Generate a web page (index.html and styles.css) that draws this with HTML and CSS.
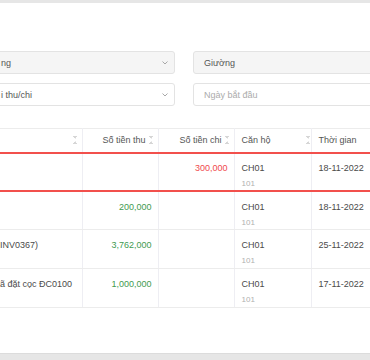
FILE: index.html
```html
<!DOCTYPE html>
<html lang="vi">
<head>
<meta charset="utf-8">
<link rel="stylesheet" href="styles.css">
</head>
<body>
<div class="page">
  <div class="topbar"></div>
  <div class="content">
    <div class="filters">
      <div class="field select filled left"><span class="val">ng</span><svg class="chev" width="6" height="4" viewBox="0 0 6 4"><path d="M0.5 0.5 L3 3 L5.5 0.5" fill="none" stroke="#a8a8a8" stroke-width="1"/></svg></div>
      <div class="field filled right"><span class="val">Giường</span></div>
      <div class="field select left"><span class="val">i thu/chi</span><svg class="chev" width="6" height="4" viewBox="0 0 6 4"><path d="M0.5 0.5 L3 3 L5.5 0.5" fill="none" stroke="#a8a8a8" stroke-width="1"/></svg></div>
      <div class="field right"><span class="ph">Ngày bắt đầu</span></div>
    </div>
    <table class="grid">
      <colgroup>
        <col class="c1"><col class="c2"><col class="c3"><col class="c4"><col class="c5">
      </colgroup>
      <thead>
        <tr>
          <th class="num"><span class="sort"></span></th>
          <th class="num">Số tiền thu<span class="sort"></span></th>
          <th class="num">Số tiền chi<span class="sort"></span></th>
          <th class="txt"><span class="lbl">Căn hộ</span><span class="sort"></span></th>
          <th class="txt">Thời gian</th>
        </tr>
      </thead>
      <tbody>
        <tr class="hl">
          <td></td>
          <td class="num"></td>
          <td class="num out">300,000</td>
          <td><div>CH01</div><div class="sub">101</div></td>
          <td>18-11-2022</td>
        </tr>
        <tr>
          <td></td>
          <td class="num in">200,000</td>
          <td class="num"></td>
          <td><div>CH01</div><div class="sub">101</div></td>
          <td>18-11-2022</td>
        </tr>
        <tr>
          <td class="desc">INV0367)</td>
          <td class="num in">3,762,000</td>
          <td class="num"></td>
          <td><div>CH01</div><div class="sub">101</div></td>
          <td>25-11-2022</td>
        </tr>
        <tr>
          <td class="desc">ã đặt cọc ĐC0100</td>
          <td class="num in">1,000,000</td>
          <td class="num"></td>
          <td><div>CH01</div><div class="sub">101</div></td>
          <td>17-11-2022</td>
        </tr>
      </tbody>
    </table>
  </div>
  <div class="bottombar"></div>
</div>
</body>
</html>
```
FILE: styles.css
```css
html, body {
  margin: 0;
  padding: 0;
  background: #ffffff;
}
body {
  font-family: "Liberation Sans", Arial, Helvetica, sans-serif;
  font-size: 9px;
  color: #4a4a4a;
  overflow: hidden;
}
.page {
  width: 370px;
  height: 360px;
  display: flex;
  flex-direction: column;
  overflow: hidden;
}
.topbar {
  height: 3px;
  background: #e6e6e6;
  flex: none;
}
.content {
  flex: 1;
  padding-top: 48px;
}
.filters {
  display: grid;
  grid-template-columns: 175px 1fr;
  column-gap: 18px;
  row-gap: 9px;
}
.field {
  height: 23px;
  box-sizing: border-box;
  border: 1px solid #e3e3e3;
  border-radius: 3px;
  background: #fff;
  display: flex;
  align-items: center;
  padding: 0 10px;
}
.field.filled {
  background: #f5f5f5;
}
.field.left {
  margin-left: -10px;
  padding-left: 10px;
  padding-right: 6px;
  justify-content: space-between;
}
.field.right {
  margin-right: -12px;
}
.val {
  color: #555;
}
.ph {
  color: #ababab;
}
.grid {
  margin-top: 22px;
  width: 382px;
  border-collapse: collapse;
  table-layout: fixed;
}
.c1 { width: 82px; }
.c2 { width: 76px; }
.c3 { width: 76px; }
.c4 { width: 77px; }
.c5 { width: 71px; }
.grid th {
  height: 24px;
  box-sizing: border-box;
  border-top: 1px solid #ececec;
  border-bottom: 1px solid #ececec;
  border-right: 1px solid #eeeef3;
  font-weight: normal;
  color: #555;
  padding: 0 4px 0 7px;
  white-space: nowrap;
}
.grid th.num {
  text-align: right;
}
.grid th.txt {
  text-align: left;
}
.grid th .lbl {
  display: inline-block;
  width: 61px;
}
.sort {
  display: inline-block;
  width: 5px;
  height: 8px;
  margin-left: 3px;
  vertical-align: -1px;
  background:
    linear-gradient(to top right, transparent 50%, #d6d6d6 50%) 0 0 / 2.5px 3px no-repeat,
    linear-gradient(to top left, transparent 50%, #d6d6d6 50%) 2.5px 0 / 2.5px 3px no-repeat,
    linear-gradient(to bottom right, transparent 50%, #d6d6d6 50%) 0 5px / 2.5px 3px no-repeat,
    linear-gradient(to bottom left, transparent 50%, #d6d6d6 50%) 2.5px 5px / 2.5px 3px no-repeat;
}
.grid td {
  height: 39px;
  box-sizing: border-box;
  vertical-align: top;
  padding: 9px 7px 0 7px;
  line-height: 12px;
  border-bottom: 1px solid #ececec;
  border-right: 1px solid #eeeef3;
  white-space: nowrap;
  overflow: hidden;
}
.grid td.desc {
  padding-left: 0;
}
.grid td.num {
  text-align: right;
  padding-right: 6px;
}
.grid td.in {
  color: #3f9a50;
}
.grid td.out {
  color: #f04a4d;
}
.grid tr.hl td {
  height: 37px;
  border-top: 2px solid #f2504c;
  border-bottom: 2px solid #f2504c;
  padding-top: 8px;
}
.sub {
  color: #b0b0b0;
  font-size: 8px;
  margin-top: 4px;
}
.bottombar {
  height: 6px;
  flex: none;
  background: #e6e6e6;
  border-top: 1px solid #dcdcdc;
}
```
